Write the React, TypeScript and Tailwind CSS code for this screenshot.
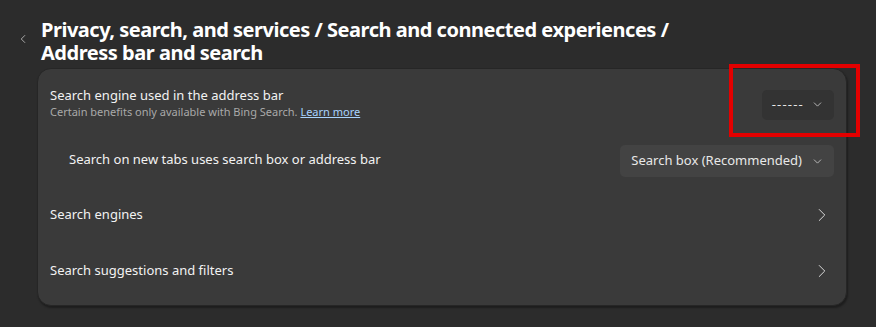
import { ChevronDown, ChevronLeft, ChevronRight } from "lucide-react"

const font = { fontFamily: '"Noto Sans", "Open Sans", sans-serif' }

function Dropdown({ label, wide }: { label: string; wide?: boolean }) {
  return (
    <div
      className={`flex items-center rounded-[5px] pr-[10px] text-[13px] text-[#e8e8e8] ${
        wide ? "h-[32px] bg-[#434343] pl-[11px]" : "h-[30px] bg-[#333333] pl-[10px]"
      }`}
    >
      <span className={wide ? "mr-[9px]" : "mr-[7px] tracking-[1.2px]"}>{label}</span>
      <ChevronDown size={13} strokeWidth={1.5} className="text-[#cfcfcf]" />
    </div>
  )
}

export default function App() {
  return (
    <div style={font} className="relative h-[327px] w-[876px] overflow-hidden bg-[#2c2c2c] text-white">
      <div className="flex pt-[18px]">
        <div className="flex w-[41px] justify-center pl-[5px] pt-[14px]">
          <ChevronLeft size={14} strokeWidth={1.3} className="text-[#cfcfcf]" />
        </div>
        <h1 className="text-[20px] leading-[23px] font-bold tracking-[-0.48px] text-white">
          Privacy, search, and services / Search and connected experiences /
          <br />
          Address bar and search
        </h1>
      </div>

      <div className="mt-[4px] ml-[37px] w-[810px] rounded-[14px] border border-[#262626] bg-[#3a3a3a] pb-[11px] shadow-[1px_2px_2px_rgba(0,0,0,0.35)]">
        <div className="flex h-[71px] items-center justify-between pr-[12px] pl-[12px]">
          <div className="pb-[4px]">
            <div className="text-[13px] leading-[18px] text-[#f2f2f2]">Search engine used in the address bar</div>
            <div className="text-[11px] leading-[16px] text-[#a9a9a9]">
              Certain benefits only available with Bing Search.{" "}
              <span className="text-[#a8d4ff] underline">Learn more</span>
            </div>
          </div>
          <Dropdown label="------" />
        </div>

        <div className="flex h-[42px] items-center justify-between pr-[12px] pl-[31px]">
          <div className="pb-[2px] text-[13px] text-[#f2f2f2]">Search on new tabs uses search box or address bar</div>
          <Dropdown label="Search box (Recommended)" wide />
        </div>

        <div className="flex h-[66px] items-center justify-between pr-[13px] pl-[12px]">
          <div className="text-[13px] text-[#f2f2f2]">Search engines</div>
          <ChevronRight size={22} strokeWidth={1} className="text-[#e6e6e6]" />
        </div>

        <div className="flex h-[46px] items-center justify-between pr-[13px] pl-[12px]">
          <div className="text-[13px] text-[#f2f2f2]">Search suggestions and filters</div>
          <ChevronRight size={22} strokeWidth={1} className="text-[#e6e6e6]" />
        </div>
      </div>

      <div className="absolute top-[64px] left-[729px] h-[73px] w-[131px] border-[4px] border-[#e30000]" />
    </div>
  )
}
